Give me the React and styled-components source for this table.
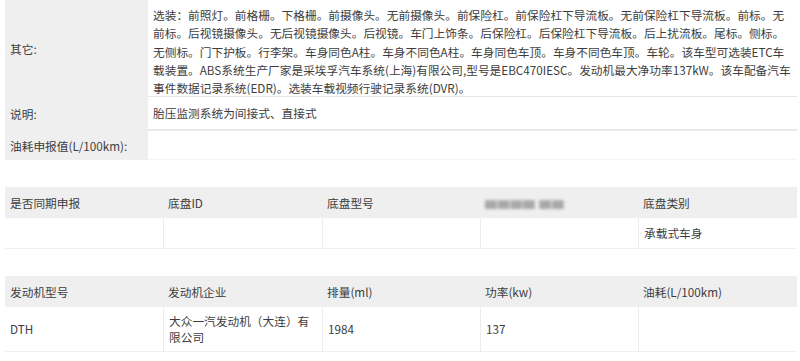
import React from 'react';
import styled, { createGlobalStyle } from 'styled-components';

const GlobalStyle = createGlobalStyle`
  html, body {
    margin: 0;
    padding: 0;
    background: #fff;
  }
  body {
    font-family: "Noto Sans CJK SC", "Noto Sans", sans-serif;
    font-size: 11.7px;
    color: #3d3d3d;
  }
`;

const Page = styled.div`
  width: 800px;
  padding: 0 3px 0 5px;
  box-sizing: border-box;
  display: flex;
  flex-direction: column;
  gap: 27px;
`;

const InfoTable = styled.div`
  display: grid;
  grid-template-columns: 143px 1fr;
`;

const InfoLabel = styled.div`
  background: #efefef;
  display: flex;
  align-items: center;
  padding-left: 5px;
  height: ${p => p.$h}px;
`;

const InfoValue = styled.div`
  padding: ${p => (p.$tall ? '6px 0 1px 5px' : '0 8px 0 5px')};
  line-height: 18.3px;
  display: ${p => (p.$tall ? 'block' : 'flex')};
  align-items: center;
  white-space: ${p => (p.$tall ? 'nowrap' : 'normal')};
  border-bottom: 1px solid ${p => (p.$last ? '#f4f4f4' : '#e6e6e6')};
  border-top: ${p => (p.$topLine ? '1px solid #ececec' : 'none')};
  box-sizing: border-box;
  height: ${p => p.$h}px;
`;

const Grid = styled.div`
  display: grid;
  grid-template-columns: 158px 159px 158px 158px 1fr;
`;

const HeadCell = styled.div`
  background: #efefef;
  height: 31px;
  display: flex;
  align-items: center;
  padding-left: 5px;
  white-space: nowrap;
`;

const DataCell = styled.div`
  height: ${p => p.$h}px;
  display: flex;
  align-items: center;
  padding: 0 10px 0 5px;
  line-height: 16.5px;
  border-left: ${p => (p.$first ? 'none' : '1px solid #ececec')};
  border-bottom: 1px solid #f0f0f0;
  box-sizing: border-box;
`;

const Blurred = styled.span`
  color: #a8a8a8;
  filter: blur(1.8px);
  letter-spacing: 1px;
`;

const otherLines = [
  '选装：前照灯。前格栅。下格栅。前摄像头。无前摄像头。前保险杠。前保险杠下导流板。无前保险杠下导流板。前标。无',
  '前标。后视镜摄像头。无后视镜摄像头。后视镜。车门上饰条。后保险杠。后保险杠下导流板。后上扰流板。尾标。侧标。',
  '无侧标。门下护板。行李架。车身同色A柱。车身不同色A柱。车身同色车顶。车身不同色车顶。车轮。该车型可选装ETC车',
  '载装置。ABS系统生产厂家是采埃孚汽车系统(上海)有限公司,型号是EBC470IESC。发动机最大净功率137kW。该车配备汽车',
  '事件数据记录系统(EDR)。选装车载视频行驶记录系统(DVR)。',
];

const chassisHead = ['是否同期申报', '底盘ID', '底盘型号', null, '底盘类别'];
const chassisData = ['', '', '', '', '承载式车身'];
const engineHead = ['发动机型号', '发动机企业', '排量(ml)', '功率(kw)', '油耗(L/100km)'];
const engineData = ['DTH', '大众一汽发动机（大连）有限公司', '1984', '137', ''];

function App() {
  return (
    <>
      <GlobalStyle />
      <Page>
        <InfoTable>
          <InfoLabel $h={97}>其它:</InfoLabel>
          <InfoValue $h={97} $tall>
            {otherLines.map((l, i) => (
              <React.Fragment key={i}>
                {l}
                {i < otherLines.length - 1 && <br />}
              </React.Fragment>
            ))}
          </InfoValue>
          <InfoLabel $h={33}>说明:</InfoLabel>
          <InfoValue $h={33}>胎压监测系统为间接式、直接式</InfoValue>
          <InfoLabel $h={30}>油耗申报值(L/100km):</InfoLabel>
          <InfoValue $h={30} $topLine $last />
        </InfoTable>

        <Grid>
          {chassisHead.map((h, i) => (
            <HeadCell key={i}>{h === null ? <Blurred>▆▆▆▆ ▆▆</Blurred> : h}</HeadCell>
          ))}
          {chassisData.map((d, i) => (
            <DataCell key={i} $h={31} $first={i === 0}>{d}</DataCell>
          ))}
        </Grid>

        <Grid>
          {engineHead.map((h, i) => (
            <HeadCell key={i}>{h}</HeadCell>
          ))}
          {engineData.map((d, i) => (
            <DataCell key={i} $h={45} $first={i === 0}>{d}</DataCell>
          ))}
        </Grid>
      </Page>
    </>
  );
}

export default App;
